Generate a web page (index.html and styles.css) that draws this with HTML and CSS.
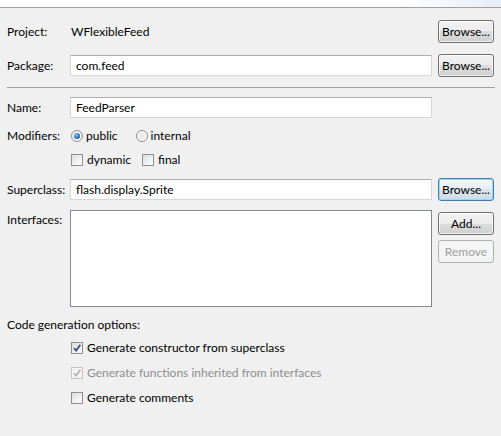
FILE: index.html
```html
<!DOCTYPE html>
<html>
<head>
<meta charset="utf-8">
<link rel="stylesheet" href="styles.css">
</head>
<body>
<div class="banner"></div>
<div class="form">
  <div class="row r-project">
    <div class="label">Project:</div>
    <div class="field value">WFlexibleFeed</div>
    <button class="btn">Browse...</button>
  </div>
  <div class="row r-package">
    <div class="label">Package:</div>
    <div class="field input">com.feed</div>
    <button class="btn">Browse...</button>
  </div>
  <div class="sep"></div>
  <div class="row r-name">
    <div class="label">Name:</div>
    <div class="field input">FeedParser</div>
  </div>
  <div class="row r-mod">
    <div class="label">Modifiers:</div>
    <div class="opts">
      <span class="opt"><span class="radio on"></span>public</span>
      <span class="opt opt-int"><span class="radio"></span>internal</span>
    </div>
  </div>
  <div class="row r-flags">
    <div class="label"></div>
    <div class="opts">
      <span class="opt"><span class="check"></span>dynamic</span>
      <span class="opt opt-final"><span class="check"></span>final</span>
    </div>
  </div>
  <div class="row r-super">
    <div class="label">Superclass:</div>
    <div class="field input">flash.display.Sprite</div>
    <button class="btn focus">Browse...</button>
  </div>
  <div class="row r-ifaces">
    <div class="label lab-top">Interfaces:</div>
    <div class="field list"></div>
    <div class="btncol">
      <button class="btn add">Add...</button>
      <button class="btn remove" disabled>Remove</button>
    </div>
  </div>
  <div class="codegen">Code generation options:</div>
  <div class="gen">
    <span class="opt"><span class="check"><svg viewBox="0 0 12 12" width="12" height="12"><path d="M3 6.2 L5.2 8.6 L9.3 2.8" fill="none" stroke="#3d4f8c" stroke-width="1.9"/></svg></span>Generate constructor from superclass</span>
  </div>
  <div class="gen dis">
    <span class="opt"><span class="check"><svg viewBox="0 0 12 12" width="12" height="12"><path d="M3 6.2 L5.2 8.6 L9.3 2.8" fill="none" stroke="#b4b4b4" stroke-width="1.9"/></svg></span>Generate functions inherited from interfaces</span>
  </div>
  <div class="gen">
    <span class="opt"><span class="check"></span>Generate comments</span>
  </div>
</div>
</body>
</html>
```
FILE: styles.css
```css
html, body {
  margin: 0;
  padding: 0;
}
body {
  width: 501px;
  height: 436px;
  background: #f0f0f0;
  font-family: Lato, "Open Sans", sans-serif;
  font-size: 12px;
  color: #000;
  overflow: hidden;
}
.banner {
  height: 7px;
  background: linear-gradient(90deg, #ffffff 0%, #ffffff 80%, #e6ecf8 100%);
  border-bottom: 1px solid #a0a0a0;
}
.form {
  padding: 0 6px 0 7px;
}
.row {
  display: flex;
  align-items: center;
}
.label {
  width: 63px;
  flex: none;
  white-space: nowrap;
}
.field {
  width: 362px;
  flex: none;
  box-sizing: border-box;
}
.value {
  padding-left: 1px;
}
.input {
  height: 21px;
  background: #fff;
  border: 1px solid #d5d7dc;
  border-top-color: #abadb3;
  padding: 0 5px;
  line-height: 19px;
}
.btn {
  margin: 0 0 0 6px;
  width: 56px;
  height: 23px;
  flex: none;
  box-sizing: border-box;
  border: 1px solid #707070;
  border-radius: 3px;
  background: linear-gradient(#f2f2f2 0%, #ebebeb 50%, #dddddd 50%, #cfcfcf 100%);
  font-family: inherit;
  font-size: 12px;
  color: #000;
  padding: 0;
  box-shadow: inset 0 0 0 1px rgba(255,255,255,0.7);
}
.btn.focus {
  border-color: #3c7fb1;
  box-shadow: inset 0 0 0 1px #9fd5f2;
  background: linear-gradient(#f1f6f9 0%, #e8eff4 50%, #dae5ec 50%, #cfdde7 100%);
}
.btn.remove {
  color: #a0a0a0;
  border-color: #adb2b5;
  background: #f4f4f4;
  box-shadow: none;
}
.r-project { margin-top: 12px; height: 23px; }
.r-package { margin-top: 11px; height: 23px; }
.sep {
  margin-top: 10px;
  height: 1px;
  background: #a0a0a0;
}
.r-name { margin-top: 9px; height: 21px; }
.r-mod { margin-top: 9px; height: 17px; }
.r-flags { margin-top: 7px; height: 17px; }
.r-super { margin-top: 10px; height: 23px; }
.r-ifaces { margin-top: 9px; align-items: flex-start; }
.lab-top { padding-top: 2px; }
.list {
  height: 97px;
  background: #fff;
  border: 1px solid #828790;
}
.btncol {
  display: flex;
  flex-direction: column;
  padding-top: 2px;
}
.btn.remove { margin-top: 5px; }
.opts {
  display: flex;
  align-items: center;
  padding-left: 1px;
}
.opt {
  display: inline-flex;
  align-items: center;
  white-space: nowrap;
}
.opt-int { margin-left: 18px; }
.opt-final { margin-left: 11px; }
.radio {
  width: 12px;
  height: 12px;
  box-sizing: border-box;
  border-radius: 50%;
  border: 1px solid #8e8f8f;
  background: radial-gradient(circle at 50% 50%, #e4e4e4 0%, #f8f8f8 70%);
  margin-right: 3px;
  position: relative;
}
.radio.on::after {
  content: "";
  position: absolute;
  left: 2px;
  top: 2px;
  width: 6px;
  height: 6px;
  border-radius: 50%;
  background: radial-gradient(circle at 40% 35%, #8cc8f4 0%, #2a72c2 55%, #173f7d 100%);
}
.check {
  width: 12px;
  height: 12px;
  box-sizing: border-box;
  border: 1px solid #8e8f8f;
  background: linear-gradient(135deg, #dcdcdc 0%, #f6f6f6 70%, #ffffff 100%);
  margin-right: 4px;
  display: inline-flex;
  align-items: center;
  justify-content: center;
  flex: none;
  overflow: visible;
}
.check svg {
  display: block;
  flex: none;
}
.codegen {
  margin-top: 10px;
  height: 16px;
  line-height: 16px;
}
.gen {
  height: 25px;
  display: flex;
  align-items: center;
  padding-left: 64px;
}
.codegen + .gen { margin-top: 2px; }
.gen.dis { color: #8d8d8d; }
.gen.dis .check {
  border-color: #c5c5c5;
  background: #f4f4f4;
}
```
